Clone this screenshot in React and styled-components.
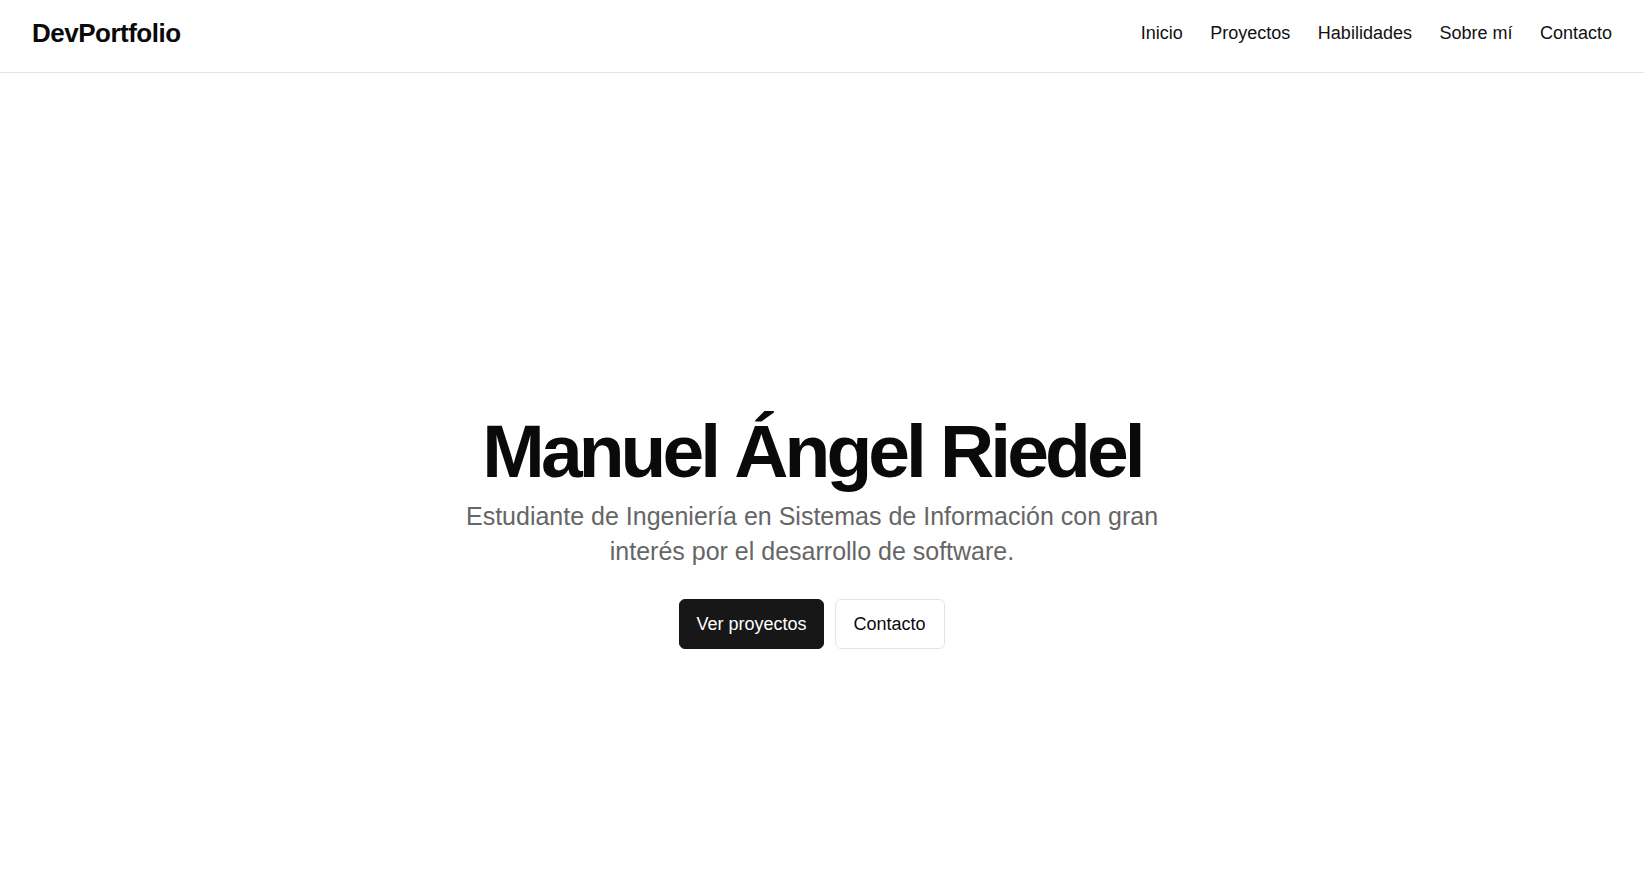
import React from "react";
import styled, { createGlobalStyle } from "styled-components";

const GlobalStyle = createGlobalStyle`
  *, *::before, *::after {
    box-sizing: border-box;
  }
  body {
    margin: 0;
    background: #ffffff;
    font-family: "Liberation Sans", Arial, sans-serif;
    color: #0a0a0a;
  }
`;

const links = ["Inicio", "Proyectos", "Habilidades", "Sobre mí", "Contacto"];

const App = () => {
  return (
    <>
      <GlobalStyle />
      <Header>
        <Logo>DevPortfolio</Logo>
        <Nav>
          {links.map((link, i) => (
            <NavLink key={i} href="#">
              {link}
            </NavLink>
          ))}
        </Nav>
      </Header>
      <Hero>
        <Title>Manuel Ángel Riedel</Title>
        <Subtitle>
          Estudiante de Ingeniería en Sistemas de Información con gran interés
          por el desarrollo de software.
        </Subtitle>
        <Actions>
          <Button primary>Ver proyectos</Button>
          <Button>Contacto</Button>
        </Actions>
      </Hero>
    </>
  );
};

export default App;

const Header = styled.header`
  height: 73px;
  padding: 0 32px 6px;
  display: flex;
  align-items: center;
  justify-content: space-between;
  border-bottom: 1px solid #e5e5e5;
  background: #ffffff;
`;

const Logo = styled.div`
  font-size: 26px;
  font-weight: 700;
  letter-spacing: -0.5px;
  color: #0a0a0a;
`;

const Nav = styled.nav`
  display: flex;
  align-items: center;
  gap: 27.5px;
`;

const NavLink = styled.a`
  font-size: 18px;
  color: #111111;
  text-decoration: none;
`;

const Hero = styled.main`
  min-height: calc(100vh - 73px);
  padding: 102px 20px 0 0;
  display: flex;
  flex-direction: column;
  align-items: center;
  justify-content: center;
  text-align: center;
`;

const Title = styled.h1`
  margin: 0;
  font-size: 75px;
  line-height: 1;
  font-weight: 700;
  letter-spacing: -3.9px;
  color: #0a0a0a;
`;

const Subtitle = styled.p`
  margin: 10px 0 0;
  max-width: 740px;
  font-size: 25px;
  line-height: 35px;
  color: #666666;
`;

const Actions = styled.div`
  margin-top: 30px;
  display: flex;
  gap: 11px;
`;

const Button = styled.button`
  font-family: "Liberation Sans", Arial, sans-serif;
  font-size: 18px;
  line-height: 24px;
  padding: 12px ${(props) => (props.primary ? "16px" : "18px")};
  border-radius: 6px;
  cursor: pointer;
  border: 1px solid ${(props) => (props.primary ? "#171717" : "#e5e5e5")};
  background-color: ${(props) => (props.primary ? "#171717" : "#ffffff")};
  color: ${(props) => (props.primary ? "#ffffff" : "#0a0a0a")};
`;
